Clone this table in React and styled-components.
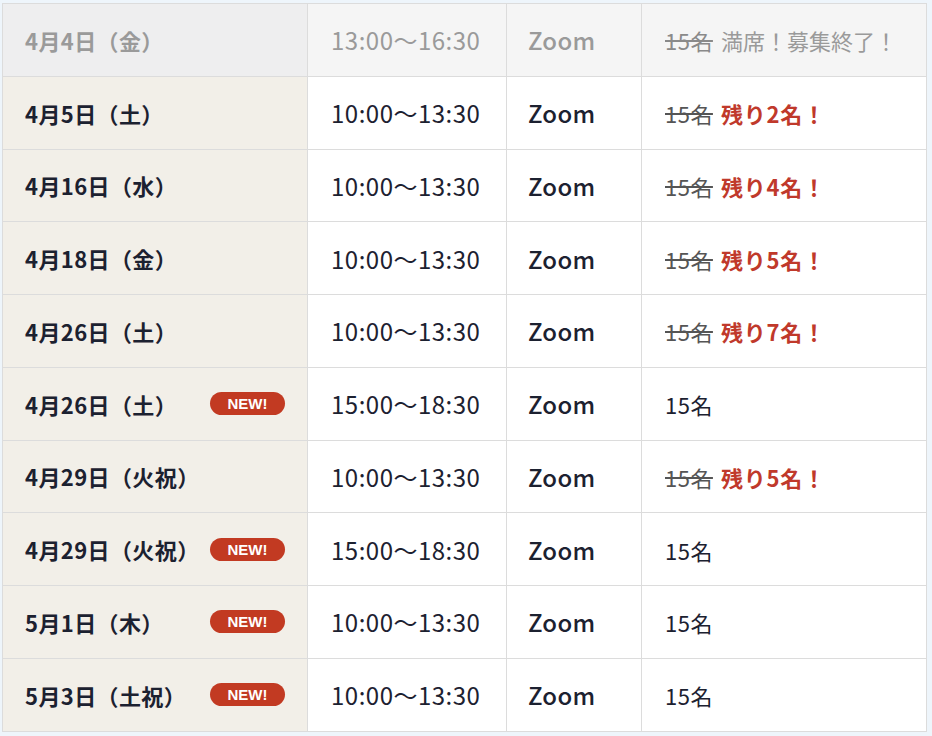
import React from "react";
import styled, { createGlobalStyle } from "styled-components";

const Global = createGlobalStyle`
  html, body { margin: 0; padding: 0; background: #eef5fb; }
  body { font-family: "Noto Sans CJK JP", "Noto Sans", sans-serif; }
`;

const Wrap = styled.div`
  padding: 3px 6px 5px 2px;
`;

const Table = styled.table`
  width: 924px;
  border-collapse: collapse;
  table-layout: fixed;
  background: #fff;
  border: 1px solid #dcdcdc;
`;

const Row = styled.tr`
  height: 72.75px;
`;

const DateCell = styled.td`
  width: 305px;
  box-sizing: border-box;
  padding: 0 22px 0 22px;
  background: ${(p) => (p.$closed ? "#eeeeef" : "#f2efe8")};
  border: 1px solid #dcdcdc;
  vertical-align: middle;
`;

const DateInner = styled.div`
  display: flex;
  align-items: center;
  justify-content: space-between;
`;

const DateText = styled.span`
  font-size: 22px;
  font-weight: 700;
  color: ${(p) => (p.$closed ? "#9a9a9a" : "#1c2130")};
  letter-spacing: 0.4px;
`;

const Badge = styled.span`
  display: inline-flex;
  align-items: center;
  justify-content: center;
  width: 75px;
  height: 23px;
  border-radius: 12px;
  background: #c23a22;
  color: #fff;
  font-family: "Liberation Sans", Arial, sans-serif;
  font-weight: 700;
  font-size: 15px;
`;

const Cell = styled.td`
  width: ${(p) => p.$w}px;
  box-sizing: border-box;
  padding: 0 0 0 ${(p) => p.$pl}px;
  background: ${(p) => (p.$closed ? "#f5f5f5" : "#fff")};
  border: 1px solid #dcdcdc;
  font-size: 24px;
  letter-spacing: ${(p) => p.$ls || 0}px;
  font-weight: ${(p) => p.$weight || 400};
  color: ${(p) => (p.$closed ? "#9a9a9a" : "#1c2130")};
  vertical-align: middle;
  white-space: nowrap;
`;

const Struck = styled.span`
  text-decoration: line-through;
  color: ${(p) => (p.$closed ? "#8a8a8a" : "#555")};
  font-size: 22px;
  letter-spacing: 0.5px;
  margin-right: 8px;
`;

const Note = styled.span`
  font-size: 22px;
  font-weight: ${(p) => (p.$closed ? 400 : 700)};
  color: ${(p) => (p.$closed ? "#9a9a9a" : "#c0392b")};
  letter-spacing: ${(p) => (p.$closed ? 0 : 0.8)}px;
`;

const Plain = styled.span`
  font-size: 22px;
  letter-spacing: 0.5px;
  color: #1c2130;
`;

const rows = [
  { date: "4月4日（金）", time: "13:00〜16:30", closed: true, note: "満席！募集終了！" },
  { date: "4月5日（土）", time: "10:00〜13:30", note: "残り2名！" },
  { date: "4月16日（水）", time: "10:00〜13:30", note: "残り4名！" },
  { date: "4月18日（金）", time: "10:00〜13:30", note: "残り5名！" },
  { date: "4月26日（土）", time: "10:00〜13:30", note: "残り7名！" },
  { date: "4月26日（土）", time: "15:00〜18:30", isNew: true },
  { date: "4月29日（火祝）", time: "10:00〜13:30", note: "残り5名！" },
  { date: "4月29日（火祝）", time: "15:00〜18:30", isNew: true },
  { date: "5月1日（木）", time: "10:00〜13:30", isNew: true },
  { date: "5月3日（土祝）", time: "10:00〜13:30", isNew: true },
];

export default function App() {
  return (
    <Wrap>
      <Global />
      <Table>
        <tbody>
          {rows.map((r, i) => (
            <Row key={i}>
              <DateCell $closed={r.closed}>
                <DateInner>
                  <DateText $closed={r.closed}>{r.date}</DateText>
                  {r.isNew && <Badge>NEW!</Badge>}
                </DateInner>
              </DateCell>
              <Cell $w={199} $pl={23} $ls={0.5} $closed={r.closed}>
                {r.time}
              </Cell>
              <Cell $w={135} $pl={21} $weight={500} $ls={0.3} $closed={r.closed}>
                Zoom
              </Cell>
              <Cell $w={285} $pl={23} $closed={r.closed}>
                {r.note ? (
                  <>
                    <Struck $closed={r.closed}>15名</Struck>
                    <Note $closed={r.closed}>{r.note}</Note>
                  </>
                ) : (
                  <Plain>15名</Plain>
                )}
              </Cell>
            </Row>
          ))}
        </tbody>
      </Table>
    </Wrap>
  );
}
